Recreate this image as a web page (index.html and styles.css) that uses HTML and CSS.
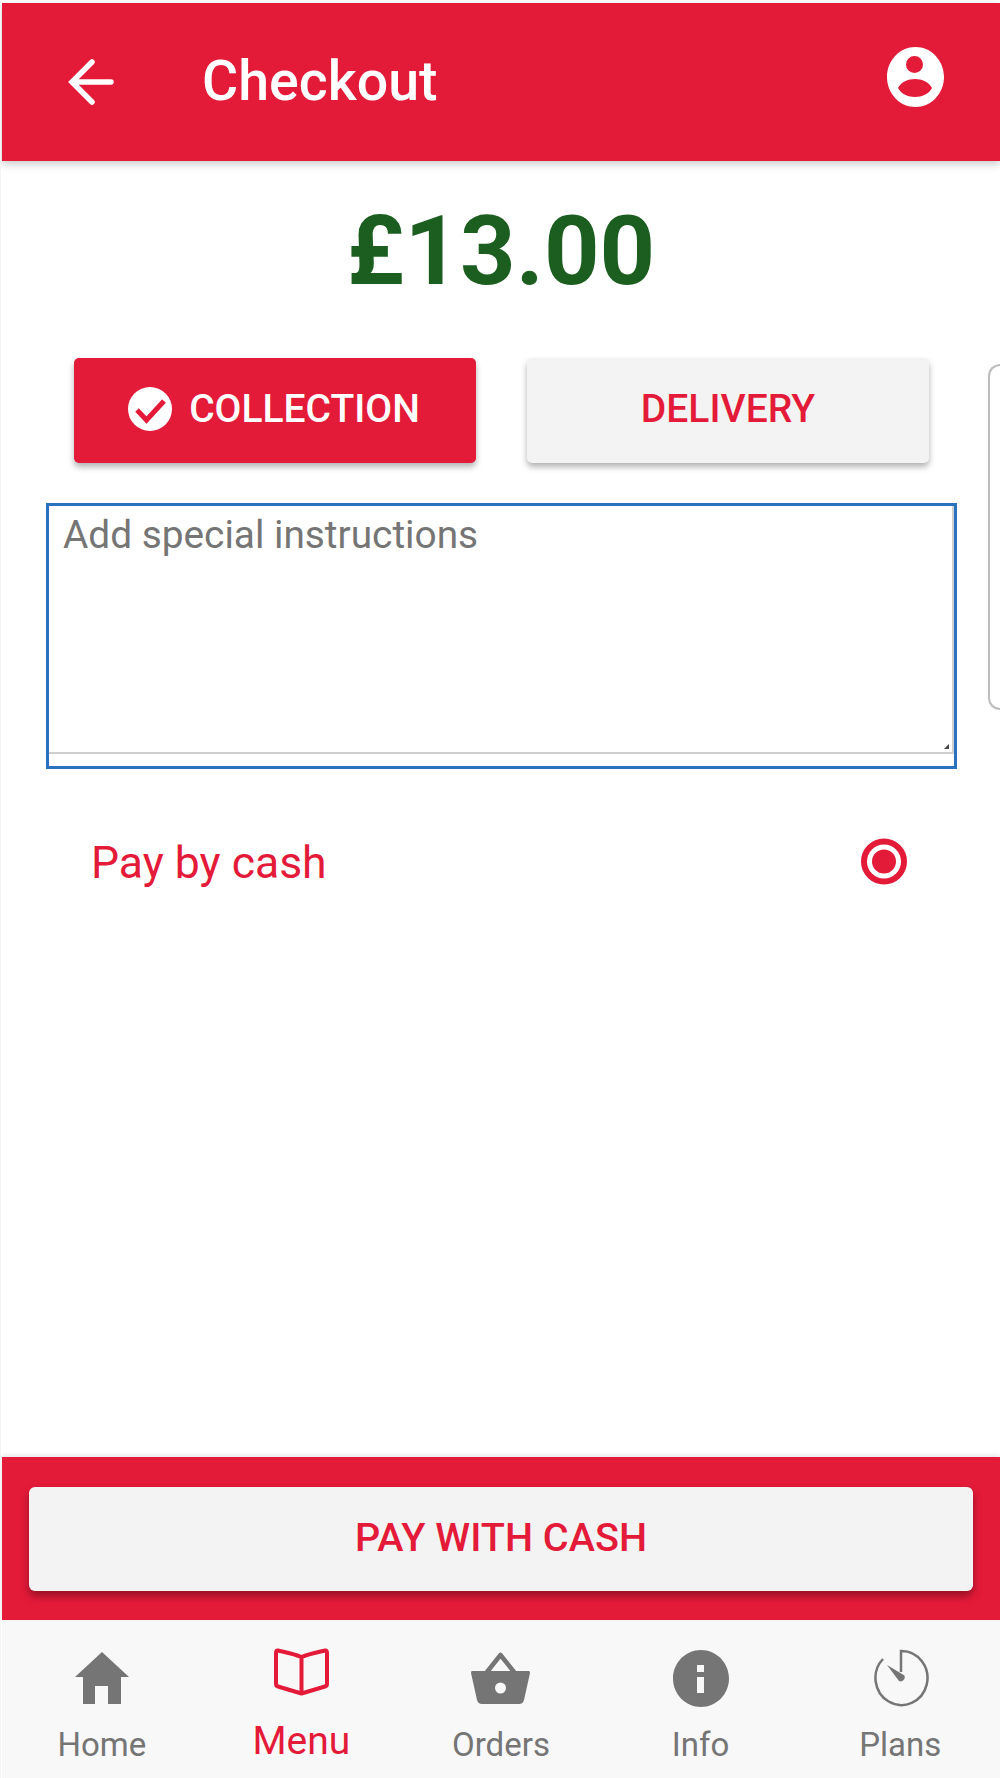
FILE: index.html
```html
<!DOCTYPE html>
<html lang="en">
<head>
<meta charset="utf-8">
<title>Checkout</title>
<link rel="stylesheet" href="styles.css">
</head>
<body>
<div class="app">
  <header class="topbar">
    <svg class="back-icon" width="46" height="48" viewBox="0 0 46 48" aria-hidden="true"><path d="M43 24H5M24 4 4 24l20 20" fill="none" stroke="#fff" stroke-width="5.5" stroke-linecap="round" stroke-linejoin="miter"/></svg>
    <h1 class="title">Checkout</h1>
    <svg class="account-icon" width="57" height="60" viewBox="0 0 57 60" aria-hidden="true"><path fill="#fff" fill-rule="evenodd" d="M28.500 0C44.200 0 57 13.400 57 30S44.200 60 28.500 60 0 46.600 0 30 12.800 0 28.500 0ZM27.500 9a8.500 8.500 0 1 0 0 17 8.500 8.500 0 0 0 0-17ZM11 41C14 35 21 32 28 32S42 35 45 41C42 47 35 50 28 50S14 47 11 41Z"/></svg>
  </header>
  <main class="content">
    <div class="amount">£13.00</div>
    <div class="slides">
      <section class="slide">
        <div class="fulfilment">
          <button class="choice choice-active" type="button">
            <svg width="44" height="44" viewBox="0 0 44 44" aria-hidden="true"><circle cx="22" cy="22" r="22" fill="#fff"/><path d="M9 23l9.500 10L36 14" fill="none" stroke="#e41a39" stroke-width="5"/></svg>
            <span>COLLECTION</span>
          </button>
          <button class="choice" type="button"><span>DELIVERY</span></button>
        </div>
        <div class="notes">
          <div class="notes-field">
            <span class="placeholder">Add special instructions</span>
            <svg class="resizer" width="5" height="5" viewBox="0 0 6 6" aria-hidden="true"><path d="M0 6 6 0V6Z" fill="#444"/></svg>
          </div>
        </div>
        <div class="pay-option">
          <span>Pay by cash</span>
          <svg class="radio" width="46" height="47" viewBox="0 0 46 47" aria-hidden="true"><circle cx="23" cy="23.500" r="20" fill="none" stroke="#e41a39" stroke-width="6"/><circle cx="23" cy="23.500" r="12" fill="#e41a39"/></svg>
        </div>
      </section>
      <div class="next-slide"></div>
    </div>
  </main>
  <div class="paybar">
    <button class="pay-button" type="button">PAY WITH CASH</button>
  </div>
  <nav class="tabs">
    <a class="tab">
      <span class="tab-icon"><svg width="54" height="52" viewBox="0 0 54 52" aria-hidden="true"><path fill="#757575" d="M27 0 54 25H46V52H33V34H20V52H8V25H0Z"/></svg></span>
      <span class="tab-label">Home</span>
    </a>
    <a class="tab tab-active">
      <span class="tab-icon"><svg width="55" height="48" viewBox="0 0 55 48" aria-hidden="true"><path fill="none" stroke="#e41a39" stroke-width="4" stroke-linejoin="round" d="M27.500 9C20 6 10 4 4 2.500 2.500 2.300 2 3 2 5V36Q2 38 4 38.500L27.500 45.500 51 38.500Q53 38 53 36V5C53 3 52.500 2.300 51 2.500 45 4 35 6 27.500 9ZM27.500 9V45"/></svg></span>
      <span class="tab-label">Menu</span>
    </a>
    <a class="tab">
      <span class="tab-icon"><svg width="59" height="52" viewBox="0 0 59 52" aria-hidden="true"><path fill="none" stroke="#757575" stroke-width="4.500" stroke-linecap="round" stroke-linejoin="round" d="M16 20 29.500 3 43 20"/><path fill="#757575" fill-rule="evenodd" d="M1 19H58Q59 19 59 21L53 48Q52 52 48 52H11Q7 52 6 48L0 21Q0 19 1 19ZM29.500 30.500a5.500 5.500 0 1 0 0 11 5.500 5.500 0 0 0 0-11Z"/></svg></span>
      <span class="tab-label">Orders</span>
    </a>
    <a class="tab">
      <span class="tab-icon"><svg width="56" height="57" viewBox="0 0 56 57" aria-hidden="true"><path fill="#757575" fill-rule="evenodd" d="M28 0C43.500 0 56 12.800 56 28.500S43.500 57 28 57 0 44.200 0 28.500 12.500 0 28 0ZM24 15V22H31V15ZM24 27V43H31V27Z"/></svg></span>
      <span class="tab-label">Info</span>
    </a>
    <a class="tab">
      <span class="tab-icon plans-icon"><svg width="56" height="58" viewBox="0 0 56 58" aria-hidden="true"><path fill="none" stroke="#757575" stroke-width="2.500" d="M28 23V2A26 27 0 1 1 10 10"/><path fill="#757575" d="M14 16 31.500 26.500A4.200 4.200 0 0 1 26 32Z"/></svg></span>
      <span class="tab-label">Plans</span>
    </a>
  </nav>
</div>
</body>
</html>
```
FILE: styles.css
```css
* { box-sizing: border-box; }
html, body { margin: 0; padding: 0; background: #fff; }
body { font-family: Roboto, "Liberation Sans", sans-serif; }
.app {
  width: 1000px;
  height: 1778px;
  padding: 3px 0 0 1px;
  display: flex;
  flex-direction: column;
  border-left: 1px solid #f4f4f4;
  overflow: hidden;
}
.topbar {
  height: 158px;
  flex: none;
  background: #e41a39;
  display: flex;
  align-items: center;
  padding: 0 56px 0 66px;
  color: #fff;
  box-shadow: 0 3px 8px rgba(0, 0, 0, .22);
  position: relative;
}
.back-icon { flex: none; }
.title {
  margin: 0 0 0 88px;
  flex: 1;
  font-size: 55.500px;
  font-weight: 500;
  line-height: 1;
}
.account-icon { margin-top: -10px; flex: none; }
.content { flex: 1; min-height: 0; display: flex; flex-direction: column; }
.amount {
  height: 197px;
  padding-top: 42px;
  text-align: center;
  font-size: 97px;
  line-height: 1;
  font-weight: 700;
  color: #1b5e20;
}
.slides { display: flex; flex: 1; }
.slide { width: 986px; flex: none; padding-left: 44px; }
.next-slide {
  flex: 1;
  height: 346px;
  margin-top: 6px;
  border: 2px solid #bdbdbd;
  border-right: 0;
  border-radius: 12px 0 0 12px;
}
.fulfilment { display: flex; gap: 51px; padding-left: 28px; }
.choice {
  width: 402px;
  height: 105px;
  padding: 0 0 4px;
  border: 0;
  border-radius: 5px;
  background: #f3f3f3;
  color: #e41a39;
  font: 500 39px Roboto, "Liberation Sans", sans-serif;
  display: flex;
  align-items: center;
  justify-content: center;
  gap: 17px;
  box-shadow: 0 4px 6px rgba(0, 0, 0, .3);
}
.choice-active { background: #e41a39; color: #fff; padding-right: 2px; }
.notes {
  width: 911px;
  height: 266px;
  margin-top: 40px;
  border: 3px solid #2a72c0;
  background: #fff;
}
.notes-field {
  height: 248px;
  padding: 7px 14px;
  border-right: 2px solid #cfcfcf;
  border-bottom: 2px solid #cfcfcf;
  display: flex;
  position: relative;
}
.placeholder { font-size: 38.800px; line-height: 44px; color: #757575; }
.resizer { position: absolute; right: 3px; bottom: 3px; }
.pay-option {
  width: 861px;
  margin-top: 68px;
  padding-left: 45px;
  display: flex;
  justify-content: space-between;
  align-items: center;
  font-size: 44.500px;
  color: #e41a39;
}
.radio { margin-bottom: 4px; }
.paybar {
  height: 163px;
  flex: none;
  background: #e41a39;
  padding: 30px 27px 29px;
  box-shadow: 0 -2px 5px rgba(0, 0, 0, .1);
  position: relative;
}
.pay-button {
  width: 100%;
  height: 104px;
  padding: 0 0 4px;
  border: 0;
  border-radius: 6px;
  background: #f3f3f3;
  color: #e41a39;
  font: 500 39.600px Roboto, "Liberation Sans", sans-serif;
  box-shadow: 0 5px 9px rgba(0, 0, 0, .35);
}
.tabs {
  height: 158px;
  flex: none;
  background: #f8f8f8;
  display: grid;
  grid-template-columns: repeat(5, 1fr);
  padding-top: 28px;
}
.tab {
  display: flex;
  flex-direction: column;
  align-items: center;
  color: #757575;
}
.tab-icon {
  height: 60px;
  display: flex;
  align-items: center;
  justify-content: center;
}
.tab-icon svg { display: block; }
.plans-icon { padding-left: 2px; }
.tab-label { margin-top: 17px; font-size: 33px; line-height: 40px; }
.tab-active { color: #e41a39; }
.tab-active .tab-icon { align-items: flex-start; }
.tab-active .tab-label { margin-top: 11px; font-size: 39px; line-height: 44px; font-weight: 400; }
```
